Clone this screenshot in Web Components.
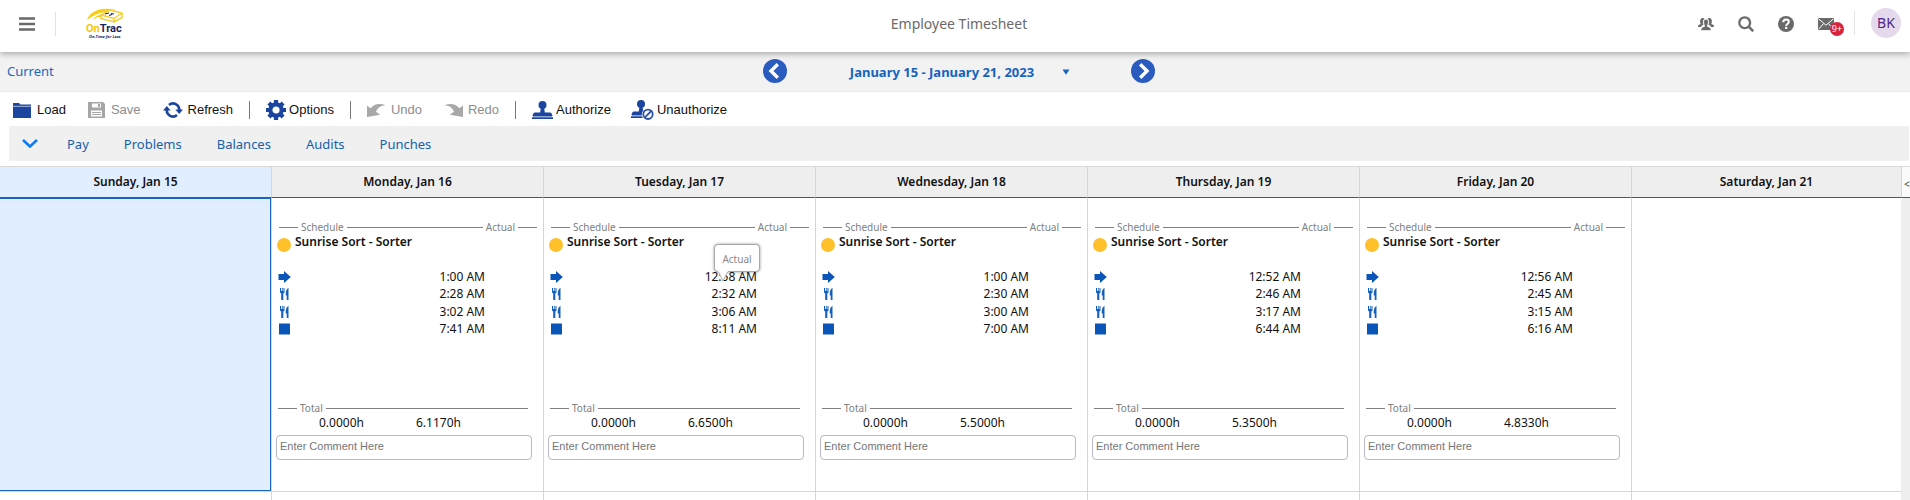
<!DOCTYPE html>
<html lang="en">
<head>
<meta charset="utf-8">
<title>Employee Timesheet</title>
<style>
body { margin: 0; background: #fff; font: 12px/16px "Noto Sans", sans-serif; color: #111; }
</style>
</head>
<body>
<timesheet-page></timesheet-page>
<script>
const define = (name, html, setup) => {
  const template = document.createElement('template');
  template.innerHTML = html;
  customElements.define(name, class extends HTMLElement {
    connectedCallback() {
      if (this.shadowRoot) return;
      const root = this.attachShadow({ mode: 'open' });
      root.append(template.content.cloneNode(true));
      if (setup) setup(root, this);
    }
  });
};

const icons = {
  menu: [16, 14, '<path d="M0 1.5h16M0 7h16M0 12.5h16" stroke="currentColor" stroke-width="2.4"/>'],
  people: [16, 14, '<g fill="currentColor"><path d="M2.6 6.6C1.8 5 1.9 1 4.5 1c1 0 1.500.4 1.800 1C5 2.800 4.600 4.500 5 6.500l.500 1.300C4 8.500 3.300 9 3 10H0c0-2 .600-2.300 2.600-2.800z"/><path d="M13.400 6.600c.800-1.600.700-5.600-1.900-5.600-1 0-1.500.4-1.800 1 1.300.800 1.700 2.500 1.300 4.500l-.500 1.300c1.500.7 2.200 1.200 2.500 2.200h3c0-2-.600-2.300-2.600-2.800z"/><path d="M8 2.300c2.100 0 2.500 1.700 2.300 3.500-.1 1.200-.6 2-.9 2.600v1c2 .9 3.600 1 3.700 4.100H2.900c.1-3.100 1.700-3.200 3.700-4.100v-1c-.3-.6-.8-1.400-.9-2.600C5.500 4 5.900 2.300 8 2.300z" stroke="#fff" stroke-width=".6"/></g>'],
  search: [16, 16, '<g fill="none" stroke="currentColor"><circle cx="6.700" cy="6.700" r="5.400" stroke-width="2.300"/><path d="M10.700 10.700l4.500 4.500" stroke-width="2.600"/></g>'],
  help: [16, 16, '<circle cx="8" cy="8" r="8" fill="currentColor"/><path d="M5.300 6.200C5.300 4.400 6.500 3.600 8 3.600s2.800.8 2.800 2.300c0 1.900-2.600 1.800-2.600 4" fill="none" stroke="#fff" stroke-width="2"/><path d="M7.100 10.900h2.200v2.100H7.100z" fill="#fff"/>'],
  mail: [16, 12, '<path fill="currentColor" d="M0 0h16v12H0z"/><path d="M.5.8L8 7.200 15.500.8M.6 11.200l4.900-5.600M15.400 11.200l-4.900-5.600" fill="none" stroke="#fff" stroke-width="1"/>'],
  prev: [24, 24, '<circle cx="12" cy="12" r="12" fill="#2a5bbf"/><path d="M14.800 5.300L8 12l6.800 6.700" fill="none" stroke="#fff" stroke-width="3.400"/>'],
  next: [24, 24, '<circle cx="12" cy="12" r="12" fill="#2a5bbf"/><path d="M9.200 5.300L16 12l-6.800 6.700" fill="none" stroke="#fff" stroke-width="3.400"/>'],
  caret: [8, 6, '<path d="M.5.500h7L4 5.700z" fill="currentColor"/>'],
  folder: [18, 16, '<path d="M0 1h6l1.500 1.500H18V16H0z" fill="#1c459f"/><path d="M0 4.300h18" stroke="#a9bbde"/>'],
  save: [17, 16, '<path d="M0 0h15l2 2v14H0z" fill="#a6a6a6"/><path d="M4 1.500h9v4H4zM3 8.500h11v6H3z" fill="#fff"/><path d="M10 2h2v3h-2zM4 10h9v1H4zM4 12h9v1H4z" fill="#a6a6a6"/>'],
  refresh: [20, 16, '<g fill="none" stroke="#1c459f" stroke-width="2.600"><path d="M6 2.900A6.200 6.200 0 0 1 16.200 8"/><path d="M14 13.100A6.200 6.200 0 0 1 3.800 8"/></g><path d="M12.300 7.500H20l-3.800 4.600zM7.700 8.500H0l3.800-4.600z" fill="#1c459f"/>'],
  gear: [20, 20, '<circle cx="10" cy="10" r="5.700" fill="none" stroke="#1c459f" stroke-width="4.200"/><g stroke="#1c459f" stroke-width="4.200"><path d="M10 0v3.500M10 16.500V20M0 10h3.500M16.500 10H20M2.900 2.900l2.500 2.500M14.600 14.600l2.500 2.500M2.900 17.100l2.500-2.500M14.600 5.400l2.500-2.500"/></g>'],
  undo: [19, 14, '<path d="M0 2.500l3.600 2.800C7 1 12.500-.3 18.600 2.300 13 2.500 10.500 5.500 9 8.800l4.200 3L0 14z" fill="#a8a8a8"/>'],
  redo: [19, 14, '<path d="M19 2.500l-3.600 2.800C12 1 6.500-.3.400 2.300 6 2.500 8.500 5.500 10 8.800l-4.200 3L19 14z" fill="#a8a8a8"/>'],
  stamp: [21, 18, '<g fill="#1c459f"><circle cx="10.500" cy="4" r="4"/><path d="M9 6h3l.8 5.500H18q2 0 2.500 3.500H.5q.5-3.500 2.500-3.500h5.200z"/><path d="M0 16.200h21V18H0z"/><path d="M1 15h19v1.200H1z" fill="#8fa5d3"/></g>'],
  unstamp: [23, 20, '<g fill="#1c459f"><circle cx="10" cy="4" r="4"/><path d="M8.600 6h2.800l.8 5.500H16V15H.5q.5-3.500 2.500-3.500h4.800z"/><path d="M0 16.200h14V18H0z"/><path d="M1 15h13v1.200H1z" fill="#8fa5d3"/></g><circle cx="17" cy="14.300" r="6.200" fill="#fff"/><circle cx="17" cy="14.300" r="4.700" fill="#fff" stroke="#2a50a5" stroke-width="1.800"/><path d="M13.900 17.400l6.200-6.200" stroke="#2a50a5" stroke-width="1.800"/>'],
  chevron: [16, 9, '<path d="M1 1l7 6.500L15 1" fill="none" stroke="#0a7cf5" stroke-width="2.600"/>'],
  shift: [14, 14, '<circle cx="7" cy="7" r="7" fill="#ffc02b"/>'],
  in: [13, 12, '<path d="M.5 3H6V0l6.800 6L6 12V9H.5z" fill="#0a55b7"/>'],
  meal: [13, 12, '<g fill="#1360bd"><path d="M2 0h1v3h.8V0h.9v3h.8V0h1v4.500L5.300 5.500V12H3.200V5.500L2 4.500z"/><path d="M10.500 0V12H8.700V7.500H7.800C7.600 4 8.300.7 10.500 0z"/></g>'],
  out: [13, 12, '<path d="M1 .5h11v11H1z" fill="#0a55b7"/>']
};

define('ui-icon', `<style>:host{display:inline-flex;flex:none}svg{display:block}</style>`, (root, host) => {
  const [w, h, shapes] = icons[host.getAttribute('name')];
  const holder = document.createElement('template');
  holder.innerHTML = `<svg width="${w}" height="${h}" viewBox="0 0 ${w} ${h}" aria-hidden="true">${shapes}</svg>`;
  root.append(holder.content);
});

define('brand-logo', `<style>
:host{display:block;width:44px;height:32px}
svg{display:block}
.name{font:700 11px Roboto,"Liberation Sans",sans-serif}
.motto{font:italic 700 4px "Open Sans","Noto Sans",sans-serif}
</style>
<svg width="44" height="32" viewBox="0 0 44 32" role="img" aria-label="OnTrac">
<path d="M1 12C4 4 12 0 24 1l6 1-5 2C17 3 9 6 1 12z" fill="#f8cd12"/>
<path d="M6 12C10 7 14 6 19 7l1 2C13 8 10 9 6 12z" fill="#f8cd12"/>
<path d="M15 7l9-5 12 3v4.500L28 14l-13-3.500zM15 7l13 3.500L36 5M28 10.500V14" fill="#fff" stroke="#f4cf2d" stroke-width="1.500"/>
<path d="M19 6l4-1M25 5.500l3 .5M23 7.500l3-1" stroke="#1b2459" stroke-width="1.200"/>
<text class="name" x="0" y="24" fill="#f5c810">On<tspan fill="#17245c">Trac</tspan></text>
<text class="motto" x="3" y="30" fill="#17245c">On-Time for Less</text>
</svg>`);

define('app-header', `<style>
:host{display:grid;grid-template-columns:1fr auto 1fr;align-items:center;height:52px;background:#fff;color:#6a6a6a;box-shadow:0 2px 6px rgba(0,0,0,.3);position:relative;z-index:2}
button{border:0;padding:0;background:none;color:inherit;font:inherit;display:flex;cursor:pointer}
.left{display:flex;align-items:center;padding:0 0 4px 19px}
.rule{width:1px;height:24px;background:#e3e3e3;margin:0 30px 0 20px}
h1{margin:0;font-size:14px;line-height:20px;font-weight:400;padding:0 0 4px 8px}
.right{display:flex;align-items:center;justify-content:flex-end;padding:0 9px 6px 0}
.tools{display:flex;align-items:center;gap:24px;padding-top:2px}
.mail{position:relative}
.badge{position:absolute;left:12px;top:4px;width:14px;height:14px;border-radius:50%;background:#d8223d;color:#fff;font-size:9px;line-height:14px;text-align:center}
.right .rule{margin:0 16px 0 20px}
.avatar{width:30px;height:30px;border-radius:50%;background:#e5daed;color:#4f2683;font-size:14px;align-items:center;justify-content:center}
</style>
<div class="left"><button aria-label="Menu"><ui-icon name="menu"></ui-icon></button><span class="rule"></span><brand-logo></brand-logo></div>
<h1>Employee Timesheet</h1>
<div class="right"><div class="tools">
<button aria-label="People"><ui-icon name="people"></ui-icon></button>
<button aria-label="Search"><ui-icon name="search"></ui-icon></button>
<button aria-label="Help"><ui-icon name="help"></ui-icon></button>
<button class="mail" aria-label="Messages"><ui-icon name="mail"></ui-icon><span class="badge">9+</span></button></div>
<span class="rule"></span><button class="avatar">BK</button></div>`);

define('period-bar', `<style>
:host{box-sizing:border-box;display:grid;grid-template-columns:1fr auto 1fr;align-items:center;height:40px;padding-bottom:1px;background:#f2f2f2;border-bottom:1px solid #dfeaf3;color:#1563c0}
a{color:#1b69c2;text-decoration:none;font-size:13px;line-height:18px;padding-left:7px}
.nav{display:flex;align-items:center;padding-left:8px}
button{border:0;padding:0;background:none;color:inherit;font:inherit;display:flex;cursor:pointer}
.period{align-items:center;gap:28px;font-size:13px;line-height:18px;font-weight:700;margin:2px 61px 0 63px}
</style>
<a href="#current">Current</a>
<div class="nav"><button aria-label="Previous period"><ui-icon name="prev"></ui-icon></button>
<button class="period">January 15 - January 21, 2023<ui-icon name="caret"></ui-icon></button>
<button aria-label="Next period"><ui-icon name="next"></ui-icon></button></div>`);

define('tool-button', `<style>
:host{display:flex;color:#111}
:host([disabled]){color:#8c8c8c}
button{display:flex;align-items:center;gap:5px;border:0;padding:0;background:none;color:inherit;font:13px/18px "Liberation Sans",Arial,sans-serif;cursor:pointer}
:host([gap="wide"]) button{gap:6px}
:host([gap="tight"]) button{gap:3px}
</style><button><slot></slot></button>`, (root, host) => {
  const icon = document.createElement('ui-icon');
  icon.setAttribute('name', host.getAttribute('icon'));
  const button = root.querySelector('button');
  button.prepend(icon);
  button.disabled = host.hasAttribute('disabled');
});

define('action-bar', `<style>
:host{box-sizing:border-box;display:flex;align-items:center;height:34px;padding:1px 0 0 13px;gap:22px}
.rule{width:1px;height:18px;background:#777;margin:0 -6px}
.stamps{display:flex;gap:20px}
</style>
<tool-button icon="folder" gap="wide">Load</tool-button>
<tool-button icon="save" gap="wide" disabled>Save</tool-button>
<tool-button icon="refresh">Refresh</tool-button>
<span class="rule"></span>
<tool-button icon="gear" gap="tight">Options</tool-button>
<span class="rule"></span>
<tool-button icon="undo" disabled>Undo</tool-button>
<tool-button icon="redo" disabled>Redo</tool-button>
<span class="rule"></span>
<div class="stamps"><tool-button icon="stamp" gap="tight">Authorize</tool-button>
<tool-button icon="unstamp" gap="tight">Unauthorize</tool-button></div>`);

define('tab-bar', `<style>
:host{display:flex;align-items:center;height:35px;margin:0 1px 5px 9px;padding-left:13px;background:#f0f0f0}
button{border:0;padding:0;background:none;display:flex;cursor:pointer}
nav{display:flex;gap:35px;margin-left:29px}
a{color:#1660a9;text-decoration:none;font-size:13px;line-height:18px}
</style>
<button aria-label="Collapse"><ui-icon name="chevron"></ui-icon></button>
<nav><a href="#pay">Pay</a><a href="#problems">Problems</a><a href="#balances">Balances</a><a href="#audits">Audits</a><a href="#punches">Punches</a></nav>`);

define('line-label', `<style>
:host{display:flex;align-items:center;height:15px;gap:3px;color:#808080;font-size:10px;line-height:15px}
i{height:1px;background:#808080;flex:1}
i.stub{flex:none;width:19px}
</style>`, (root, host) => {
  const holder = document.createElement('template');
  const end = host.getAttribute('end');
  holder.innerHTML = `<i class="stub"></i><span>${host.getAttribute('start')}</span><i></i>` + (end ? `<span>${end}</span><i class="stub"></i>` : '');
  root.append(holder.content);
});

define('tool-tip', `<style>
:host{position:absolute;z-index:1;box-sizing:border-box;width:46px;height:28px;border:1px solid #a8a8a8;border-radius:4px;background:#fff;box-shadow:0 0 3px rgba(0,0,0,.4);color:#8a8a8a;font-size:10px;line-height:28px;text-align:center}
svg{position:absolute;left:3px;top:25px}
</style><slot></slot><svg width="10" height="12" viewBox="0 0 10 12" aria-hidden="true"><path d="M0 1h10L5 11z" fill="#fff"/><path d="M.5 2L5 11 9.500 2" fill="none" stroke="#b0b0b0"/></svg>`);

define('day-entry', `<style>
:host{display:block;position:relative;padding:22px 6px 0 7px}
.shift{display:flex;align-items:center;height:14px;line-height:14px;gap:4px;margin-left:-2px;font-weight:600}
.shift ui-icon{padding-top:5px}
.punches{list-style:none;margin:19px 0 0 -1px;padding:0}
.punches li{display:flex;align-items:center;justify-content:space-between;height:17px;margin-right:52px}
.punches li:nth-child(2){margin-bottom:1px}
.total{margin:64px 9px 0 -1px}
.hours{display:flex;gap:52px;padding-left:40px;height:14px;line-height:14px}
input{display:block;box-sizing:border-box;width:100%;height:25px;padding:0 3px 4px;border:1px solid #b4b8c6;border-radius:4px;font:11px "Liberation Sans",Arial,sans-serif}
.comment{margin:5px 5px 0 -3px}
input::placeholder{color:#757575;opacity:1}
tool-tip{right:55px;top:46px}
</style>
<line-label start="Schedule" end="Actual"></line-label>
<div class="shift"><ui-icon name="shift"></ui-icon><span>Sunrise Sort - Sorter</span></div>
<ul class="punches"></ul>
<line-label class="total" start="Total"></line-label>
<div class="hours"><span>0.0000h</span><span class="sum"></span></div>
<div class="comment"><input placeholder="Enter Comment Here" aria-label="Comment"></div>`, (root, host) => {
  const kinds = ['in', 'meal', 'meal', 'out'];
  root.querySelector('.punches').innerHTML = host.getAttribute('times').split(',').map((t, i) =>
    `<li><ui-icon name="${kinds[i]}"></ui-icon><time>${t}</time></li>`).join('');
  root.querySelector('.sum').textContent = host.getAttribute('total');
  if (host.hasAttribute('tip')) {
    const tip = document.createElement('tool-tip');
    tip.textContent = host.getAttribute('tip');
    root.append(tip);
  }
});

define('week-grid', `<style>
:host{display:flex;flex:1;border-top:1px solid #d9d9d9}
table{flex:1;align-self:flex-start;border-collapse:separate;border-spacing:0;table-layout:fixed;width:0}
col:last-child{width:269px}
th,td{box-sizing:border-box;padding:0;border-right:1px solid #d6d6d6}
th{height:31px;background:#eee;font-weight:600;border-bottom:1px solid #1a5fb8}
td{height:8px;vertical-align:top}
th:last-child,td:last-child{border-right:0}
.week td{height:294px;border-bottom:1px solid #d6d6d6}
.today{background:#e1eeff}
td.today{box-shadow:inset -1px -1px #1a66c4,inset 0 1px #1a66c4}
aside{display:flex;flex-direction:column;width:9px;background:#eee;overflow:hidden}
button{flex:none;box-sizing:border-box;width:9px;height:31px;padding:4px 0 0 2px;text-align:left;border:0;border-left:1px solid #d6d6d6;border-bottom:1px solid #1a5fb8;background:#fafafa;color:#444;font:10px "Noto Sans",sans-serif;overflow:hidden}
</style>
<table><colgroup><col><col><col><col><col><col><col></colgroup>
<thead><tr><th class="today">Sunday, Jan 15</th><th>Monday, Jan 16</th><th>Tuesday, Jan 17</th><th>Wednesday, Jan 18</th><th>Thursday, Jan 19</th><th>Friday, Jan 20</th><th>Saturday, Jan 21</th></tr></thead>
<tbody><tr class="week"><td class="today"></td>
<td><day-entry times="1:00 AM,2:28 AM,3:02 AM,7:41 AM" total="6.1170h"></day-entry></td>
<td><day-entry times="12:58 AM,2:32 AM,3:06 AM,8:11 AM" total="6.6500h" tip="Actual"></day-entry></td>
<td><day-entry times="1:00 AM,2:30 AM,3:00 AM,7:00 AM" total="5.5000h"></day-entry></td>
<td><day-entry times="12:52 AM,2:46 AM,3:17 AM,6:44 AM" total="5.3500h"></day-entry></td>
<td><day-entry times="12:56 AM,2:45 AM,3:15 AM,6:16 AM" total="4.8330h"></day-entry></td>
<td></td></tr>
<tr><td></td><td></td><td></td><td></td><td></td><td></td><td></td></tr></tbody></table>
<aside><button aria-label="Expand panel">&lt;</button></aside>`);

define('timesheet-page', `<style>:host{display:flex;flex-direction:column;min-height:100vh}</style>
<app-header></app-header><period-bar></period-bar><action-bar></action-bar><tab-bar></tab-bar><week-grid></week-grid>`);
</script>
</body>
</html>
